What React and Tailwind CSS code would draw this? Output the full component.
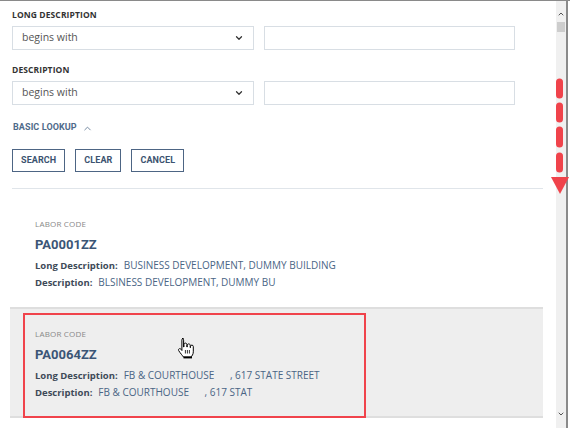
import React from 'react';
import { ChevronDown, ChevronUp } from 'lucide-react';

const FilterRow = ({ label }) => (
  <div className="flex flex-col">
    <div className="text-[8.5px] font-bold text-[#333] leading-[12px] tracking-[0.1px]">{label}</div>
    <div className="mt-[5px] flex gap-[10px]">
      <div className="w-[242px] h-[24px] border border-[#d8dee4] flex items-center justify-between pl-[9px] pr-[9px]">
        <span className="text-[10.5px] text-[#555]">begins with</span>
        <ChevronDown size={10} strokeWidth={3} className="text-[#333]" />
      </div>
      <div className="w-[251px] h-[24px] border border-[#d8dee4]" />
    </div>
  </div>
);

const Record = ({ code, longDesc, desc, active }) => (
  <div
    className={
      active
        ? 'bg-[#eeeeee] border-t-2 border-b-2 border-[#dedede] pl-[25px] pt-[19px] h-[111px]'
        : 'pl-[25px] pt-[29px] h-[118px]'
    }
  >
    <div className="text-[8px] text-[#888] leading-[12px] tracking-[0.2px]">LABOR CODE</div>
    <div className="mt-[7px] text-[13px] font-bold text-[#3b5576] leading-[16px] font-['Roboto']">{code}</div>
    <div className="mt-[4px] text-[9.5px] leading-[16px] flex items-baseline">
      <span className="font-bold text-[#3e4a58]">Long Description:</span>
      <span className="ml-[6px] text-[10px] text-[#4a6585] whitespace-pre">{longDesc}</span>
    </div>
    <div className="text-[9.5px] leading-[16px] flex items-baseline">
      <span className="font-bold text-[#3e4a58]">Description:</span>
      <span className="ml-[6px] text-[10px] text-[#4a6585] whitespace-pre">{desc}</span>
    </div>
  </div>
);

const HandCursor = () => (
  <svg width="20" height="22" viewBox="0 0 20 22" className="absolute left-[176px] top-[336px]">
    <path
      d="M6 1.5c1 0 1.6.7 1.6 1.6V10h.3V7.6c0-.9.7-1.5 1.5-1.5s1.5.6 1.5 1.5V10h.3V8.4c0-.9.7-1.5 1.5-1.5s1.5.6 1.5 1.5V10.6h.3V9.5c0-.8.6-1.4 1.4-1.4s1.4.6 1.4 1.4v5.3c0 2.5-1.4 4.2-2.3 5.2H7.5c-1.2-1.6-3-3.6-4.7-6.2-.5-.8-.4-1.6.3-2 .7-.4 1.4-.1 1.9.5l.9 1.2V3.1c0-.9.6-1.6 1.5-1.6z"
      fill="#fff"
      stroke="#000"
      strokeWidth="1"
      strokeLinejoin="round"
    />
    <path d="M9.4 13v3.5M11.4 13v3.5M13.4 13v3.5" stroke="#000" strokeWidth="0.8" />
    <rect x="7.5" y="19.6" width="8.5" height="1.8" fill="#000" />
  </svg>
);

const DashedArrow = () => (
  <svg width="20" height="120" viewBox="0 0 20 120" className="absolute left-[550px] top-[76px]">
    <g stroke="#f0434b" strokeWidth="7" strokeLinecap="round">
      <line x1="9.5" y1="5" x2="9.5" y2="18" />
      <line x1="9.5" y1="29" x2="9.5" y2="42" />
      <line x1="9.5" y1="53" x2="9.5" y2="67" />
      <line x1="9.5" y1="79" x2="9.5" y2="92" />
    </g>
    <polygon points="1,100 19,100 10,117" fill="#f0434b" />
  </svg>
);

export default function App() {
  return (
    <div className="relative w-[570px] h-[428px] overflow-hidden bg-white font-['Open_Sans',sans-serif] border-t border-[#8a8a8a]">
      <div className="flex h-full">
        <div className="w-[556px] flex flex-col">
          <div className="pl-[12px] pt-[8px] flex flex-col gap-[14px]">
            <FilterRow label="LONG DESCRIPTION" />
            <FilterRow label="DESCRIPTION" />
          </div>

          <div className="pl-[13px] mt-[17px] flex items-center gap-[5px] h-[12px]">
            <span className="font-['Roboto'] font-bold text-[9px] text-[#4f6a8a] tracking-[0.1px]">BASIC LOOKUP</span>
            <ChevronUp size={11} strokeWidth={2} className="text-[#6a8099]" />
          </div>

          <div className="pl-[12px] mt-[15px] flex gap-[10px]">
            {['SEARCH', 'CLEAR', 'CANCEL'].map((b) => (
              <div
                key={b}
                className="h-[23px] px-[8px] border border-[#4d6584] flex items-center font-['Roboto'] font-bold text-[9px] tracking-[0.1px] text-[#3c5370]"
              >
                {b}
              </div>
            ))}
          </div>

          <div className="ml-[12px] mr-[13px] mt-[16px] border-t border-[#e0e5ea]" />

          <div className="ml-[10px] mr-[13px]">
            <Record
              code="PA0001ZZ"
              longDesc="BUSINESS DEVELOPMENT, DUMMY BUILDING"
              desc="BLSINESS DEVELOPMENT, DUMMY BU"
            />
            <Record
              active
              code="PA0064ZZ"
              longDesc={'FB & COURTHOUSE      , 617 STATE STREET'}
              desc={'FB & COURTHOUSE      , 617 STAT'}
            />
          </div>
        </div>

        <div className="w-[10px] bg-[#f0f0f0] flex flex-col items-center pt-[9px]">
          <ChevronUp size={8} strokeWidth={3} className="text-[#555]" />
          <div className="mt-[4px] w-[8px] h-[10px] bg-[#cdcdcd]" />
          <div className="flex-1" />
          <ChevronDown size={8} strokeWidth={3} className="text-[#555] mb-[10px]" />
        </div>
        <div className="w-[1.5px] bg-[#8a8a8a]" />
      </div>

      <div className="absolute left-[23px] top-[312px] w-[343px] h-[105px] border-2 border-[#f0434b]" />
      <HandCursor />
      <DashedArrow />
    </div>
  );
}
